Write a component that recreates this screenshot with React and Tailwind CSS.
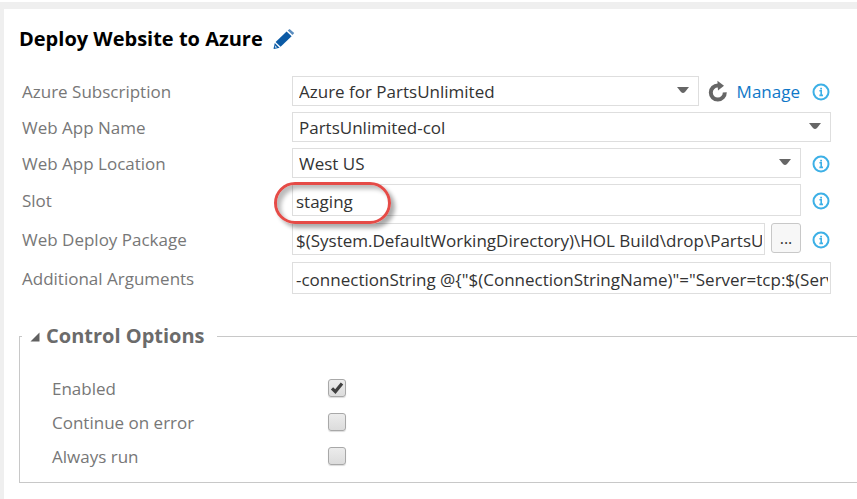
import React from "react";

const labelClass = "w-[270px] shrink-0 pt-0.5 text-[17px] leading-6 text-[#777]";
const inputClass =
  "h-8 w-full min-w-0 rounded-none border border-[#dedede] bg-white pl-[3px] pr-0.5 pt-0.5 text-[17px] leading-6 text-[#333] outline-none";

function InfoIcon() {
  return (
    <svg viewBox="0 0 18 18" className="h-[18px] w-[18px]" aria-hidden="true">
      <circle cx="9" cy="9" r="7.5" fill="#fff" stroke="#3db0e6" strokeWidth="2" />
      <path d="M7.4 7.8H9.2V12.4M7.4 12.4H11" fill="none" stroke="#3db0e6" strokeWidth="1.6" />
      <rect x="8.2" y="4.8" width="1.8" height="1.7" fill="#3db0e6" />
    </svg>
  );
}

function InfoSlot() {
  return (
    <button type="button" aria-label="More information" className="ml-[11px] mr-px mt-0.5 shrink-0">
      <InfoIcon />
    </button>
  );
}

function Field({ id, label, children, info }) {
  return (
    <div className="flex items-center">
      <label htmlFor={id} className={labelClass}>{label}</label>
      <div className="flex min-w-0 flex-1 items-center">{children}</div>
      {info && <InfoSlot />}
    </div>
  );
}

function Select({ id, value }) {
  return (
    <div className="relative min-w-0 flex-1">
      <select
        id={id}
        defaultValue={value}
        className="block h-[30px] w-full appearance-none rounded-none border border-[#dedede] bg-white pl-1.5 pt-0.5 text-[17px] leading-6 text-[#333] outline-none"
      >
        <option>{value}</option>
      </select>
      <svg viewBox="0 0 12 6" className="pointer-events-none absolute right-2.5 top-[11px] h-1.5 w-3" aria-hidden="true">
        <path d="M0 0H12L8 5Q6 7 4 5Z" fill="#666" />
      </svg>
    </div>
  );
}

function CheckRow({ id, label, checked }) {
  return (
    <div className="flex h-[34px] items-center">
      <label htmlFor={id} className="w-[276px] shrink-0 pt-0.5 text-[17px] leading-6 text-[#777]">{label}</label>
      <span className="relative h-[18px] w-[18px]">
        <input
          id={id}
          type="checkbox"
          defaultChecked={checked}
          className="peer block h-[18px] w-[18px] appearance-none rounded-[3px] border border-[#a8a8a8] bg-linear-to-b from-[#ececec] to-[#dcdcdc] shadow-[0_1px_1px_#dcdcdc]"
        />
        <svg viewBox="0 0 18 18" className="pointer-events-none absolute inset-0 hidden h-[18px] w-[18px] peer-checked:block" aria-hidden="true">
          <path d="M4 9.3L7.4 12.6L14 4.6" fill="none" stroke="#404040" strokeWidth="3.2" />
        </svg>
      </span>
    </div>
  );
}

export default function App() {
  return (
    <div className="min-h-screen overflow-hidden border-t-2 border-white bg-[#efefef] pl-1 pt-[7px] font-['Open_Sans','Noto_Sans',sans-serif]">
      <main className="min-h-[490px] bg-white pb-4 pt-4">
        <div className="flex items-center pl-[15px]">
          <h1 className="text-xl font-bold leading-7 text-black">Deploy Website to Azure</h1>
          <button type="button" aria-label="Rename task" className="ml-2.5">
            <svg viewBox="0 0 22 22" className="h-[22px] w-[22px]" aria-hidden="true">
              <path d="M13.6 3.6L18.6 8.2L7.6 18.8L2.6 14Z" fill="#0b5aa5" />
              <path d="M1.8 15L6.6 19.7L1 20.9Q.4 20.9 .6 20.2Z" fill="#0b5aa5" />
              <path d="M14.7 2.5L16.6 .9L21.2 5L19.5 7Z" fill="#5b8dbf" />
              <path d="M1.8 17.2L4.3 19.5L2 19.8Z" fill="#c6d9ea" />
            </svg>
          </button>
        </div>

        <form className="flex flex-col pl-[18px] pr-[26px] pt-[23px]">
          <div className="flex flex-col gap-1.5">
            <Field id="subscription" label="Azure Subscription" info>
              <Select id="subscription" value="Azure for PartsUnlimited" />
              <button type="button" aria-label="Refresh subscriptions" className="ml-2 mr-2 shrink-0">
                <svg viewBox="0 0 22 22" className="h-[22px] w-[22px]" aria-hidden="true">
                  <path d="M11 5.6A7 7 0 1 0 17.8 12.4" fill="none" stroke="#666" strokeWidth="4" />
                  <path d="M10.4 .8L17 5.8L11 10.6Z" fill="#666" />
                </svg>
              </button>
              <a href="#manage" className="mr-px shrink-0 pt-0.5 text-[17px] leading-6 text-[#0f78c8]">Manage</a>
            </Field>
            <Field id="app-name" label="Web App Name">
              <Select id="app-name" value="PartsUnlimited-col" />
            </Field>
            <Field id="location" label="Web App Location" info>
              <Select id="location" value="West US" />
            </Field>
          </div>
          <div className="flex flex-col gap-[7px] pt-1.5">
            <Field id="slot" label="Slot" info>
              <div className="relative min-w-0 flex-1">
                <input id="slot" type="text" defaultValue="staging" className={`${inputClass} block`} />
                <span className="pointer-events-none absolute -left-[18px] -top-0.5 h-[42px] w-[117px] rounded-full border-[3px] border-[#e54b47] shadow-[4px_4px_4px_#0005,inset_4px_4px_4px_#0004]" />
              </div>
            </Field>
            <Field id="package" label="Web Deploy Package" info>
              <input id="package" type="text" defaultValue="$(System.DefaultWorkingDirectory)\HOL Build\drop\PartsUnlimited.zip" className={inputClass} />
              <button type="button" aria-label="Browse for package" className="mb-0.5 ml-1.5 h-[30px] w-[30px] shrink-0 rounded-[3px] border border-[#c8c8c8] bg-[#f7f7f7] text-base leading-6 text-[#333]">...</button>
            </Field>
            <Field id="arguments" label="Additional Arguments">
              <input id="arguments" type="text" defaultValue={'-connectionString @{"$(ConnectionStringName)"="Server=tcp:$(ServerName).database.windows.net"}'} className={inputClass} />
            </Field>
          </div>
        </form>

        <fieldset className="ml-[15px] mt-7 border border-r-0 border-[#c8c8c8] pb-[9px] pl-8">
          <legend className="-ml-[30px] px-2 text-xl font-bold leading-7 text-[#6b6b6b]">
            <button type="button" aria-expanded="true" className="flex items-center gap-1.5 pr-1">
              <svg viewBox="0 0 10 10" className="mt-0.5 h-2.5 w-2.5" aria-hidden="true">
                <path d="M9.5 .5V9.5H.5Z" fill="#606060" />
              </svg>
              Control Options
            </button>
          </legend>
          <div className="pt-[21px]">
            <CheckRow id="enabled" label="Enabled" checked />
            <CheckRow id="continue" label="Continue on error" />
            <CheckRow id="always" label="Always run" />
          </div>
        </fieldset>
      </main>
    </div>
  );
}
